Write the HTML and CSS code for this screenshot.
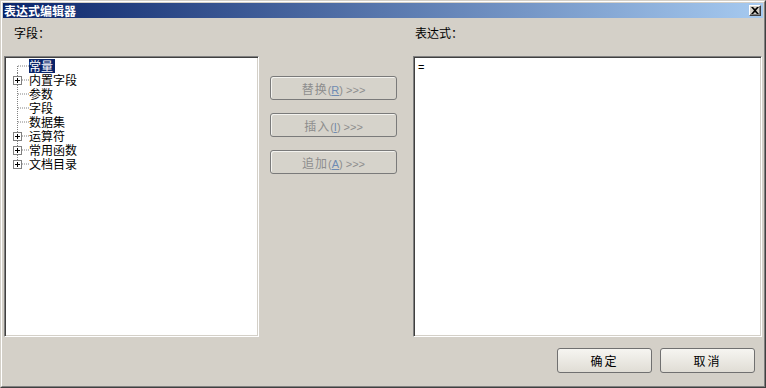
FILE: index.html
```html
<!DOCTYPE html>
<html lang="zh-CN">
<head>
    <meta charset="UTF-8">
    <title>表达式编辑器</title>
    <link rel="stylesheet" href="styles.css">
</head>
<body>
    <div class="window">
        <div class="window-inner">
            <div class="titlebar">
                <span class="title">表达式编辑器</span>
                <button class="close-btn">
                    <svg width="8" height="7" viewBox="0 0 8 7"><path d="M0 0h2l2 2 2-2h2L5 3.5 8 7H6L4 5 2 7H0l3-3.5z" fill="#000"/></svg>
                </button>
            </div>

            <div class="body">
                <div class="label left-label">字段：</div>
                <div></div>
                <div class="label right-label">表达式：</div>

                <div class="sunken tree">
                    <div class="node">
                        <svg class="gutter" width="22" height="14"><path d="M10.5 7v7M11 7h11" stroke="#808080" stroke-dasharray="1 1"/></svg>
                        <span class="node-text selected">常量</span>
                    </div>
                    <div class="node">
                        <svg class="gutter" width="22" height="14"><path d="M10.5 0v14M11 7h11" stroke="#808080" stroke-dasharray="1 1"/><rect x="6.5" y="3.5" width="8" height="8" fill="#fff" stroke="#808080"/><path d="M8 7.5h5M10.5 5v5" stroke="#000"/></svg>
                        <span class="node-text">内置字段</span>
                    </div>
                    <div class="node">
                        <svg class="gutter" width="22" height="14"><path d="M10.5 0v14M11 7h11" stroke="#808080" stroke-dasharray="1 1"/></svg>
                        <span class="node-text">参数</span>
                    </div>
                    <div class="node">
                        <svg class="gutter" width="22" height="14"><path d="M10.5 0v14M11 7h11" stroke="#808080" stroke-dasharray="1 1"/></svg>
                        <span class="node-text">字段</span>
                    </div>
                    <div class="node">
                        <svg class="gutter" width="22" height="14"><path d="M10.5 0v14M11 7h11" stroke="#808080" stroke-dasharray="1 1"/></svg>
                        <span class="node-text">数据集</span>
                    </div>
                    <div class="node">
                        <svg class="gutter" width="22" height="14"><path d="M10.5 0v14M11 7h11" stroke="#808080" stroke-dasharray="1 1"/><rect x="6.5" y="3.5" width="8" height="8" fill="#fff" stroke="#808080"/><path d="M8 7.5h5M10.5 5v5" stroke="#000"/></svg>
                        <span class="node-text">运算符</span>
                    </div>
                    <div class="node">
                        <svg class="gutter" width="22" height="14"><path d="M10.5 0v14M11 7h11" stroke="#808080" stroke-dasharray="1 1"/><rect x="6.5" y="3.5" width="8" height="8" fill="#fff" stroke="#808080"/><path d="M8 7.5h5M10.5 5v5" stroke="#000"/></svg>
                        <span class="node-text">常用函数</span>
                    </div>
                    <div class="node">
                        <svg class="gutter" width="22" height="14"><path d="M10.5 0v7M11 7h11" stroke="#808080" stroke-dasharray="1 1"/><rect x="6.5" y="3.5" width="8" height="8" fill="#fff" stroke="#808080"/><path d="M8 7.5h5M10.5 5v5" stroke="#000"/></svg>
                        <span class="node-text">文档目录</span>
                    </div>
                </div>

                <div class="actions">
                    <button class="btn-action" disabled>替换<span class="latin">(<u>R</u>) &gt;&gt;&gt;</span></button>
                    <button class="btn-action" disabled>插入<span class="latin">(<u>I</u>) &gt;&gt;&gt;</span></button>
                    <button class="btn-action" disabled>追加<span class="latin">(<u>A</u>) &gt;&gt;&gt;</span></button>
                </div>

                <div class="sunken editor">=</div>
            </div>

            <div class="footer">
                <button class="btn">确定</button>
                <button class="btn">取消</button>
            </div>
        </div>
    </div>
</body>
</html>
```

FILE: styles.css
```css
body {
    margin: 0;
    background-color: #d4d0c8;
    font-family: "Noto Sans CJK SC", "DejaVu Sans", sans-serif;
    font-size: 12px;
    color: #000;
}
.window {
    width: 766px;
    height: 388px;
    box-sizing: border-box;
    border: 1px solid;
    border-color: #d4d0c8 #404040 #404040 #d4d0c8;
}
.window-inner {
    height: 100%;
    box-sizing: border-box;
    border: 1px solid;
    border-color: #fff #808080 #808080 #fff;
    padding: 1px;
    display: flex;
    flex-direction: column;
}
.titlebar {
    height: 15px;
    display: flex;
    justify-content: space-between;
    align-items: center;
    background: linear-gradient(to right, #0a246a, #a6caf0);
}
.title {
    color: #fff;
    font-weight: bold;
    line-height: 15px;
    padding-left: 1px;
}
.close-btn {
    width: 12px;
    height: 11px;
    margin-right: 2px;
    padding: 0;
    display: flex;
    align-items: center;
    justify-content: center;
    background-color: #d4d0c8;
    border: 1px solid;
    border-color: #fff #404040 #404040 #fff;
    box-shadow: inset -1px -1px #808080;
}
.body {
    display: grid;
    grid-template-columns: 255px 154px 349px;
    grid-template-rows: 38px 281px;
    padding-left: 1px;
}
.label {
    padding-top: 8px;
    line-height: 14px;
}
.left-label {
    padding-left: 10px;
}
.right-label {
    padding-left: 2px;
}
.sunken {
    box-sizing: border-box;
    background: #fff;
    border: 1px solid;
    border-color: #808080 #fff #fff #808080;
    box-shadow: inset 1px 1px #404040, inset -1px -1px #d4d0c8;
}
.tree {
    padding: 2px 0 0 2px;
}
.node {
    display: flex;
    height: 14px;
    line-height: 14px;
}
.gutter {
    flex: none;
}
.node-text {
    padding: 0 2px 0 0;
}
.selected {
    background-color: #0a246a;
    color: #fff;
}
.actions {
    display: flex;
    flex-direction: column;
    gap: 13px;
    padding: 20px 0 0 11px;
}
.btn-action {
    width: 127px;
    height: 24px;
    padding: 0;
    font-family: inherit;
    font-size: 12px;
    color: #8d8d8d;
    background-color: #d6d3cb;
    border: 1px solid #7a7a7a;
    border-radius: 3px;
    box-shadow: inset 1px 1px #f4f3ef;
    letter-spacing: 1px;
}
.latin {
    font-family: "Liberation Sans", sans-serif;
    font-size: 11px;
    letter-spacing: 0;
    color: #8d8d8d;
}
.latin u {
    color: #6e8bb3;
}
.editor {
    padding: 3px 4px;
    font-family: "Liberation Sans", sans-serif;
    font-size: 11px;
    line-height: 14px;
}
.footer {
    display: flex;
    justify-content: flex-end;
    gap: 8px;
    padding: 11px 8px 0 0;
}
.btn {
    width: 95px;
    height: 25px;
    padding: 0;
    font-family: inherit;
    font-size: 12px;
    color: #000;
    background: linear-gradient(#f6f5f1, #e0ddd5);
    border: 1px solid #707070;
    border-radius: 3px;
    letter-spacing: 2px;
}
```
